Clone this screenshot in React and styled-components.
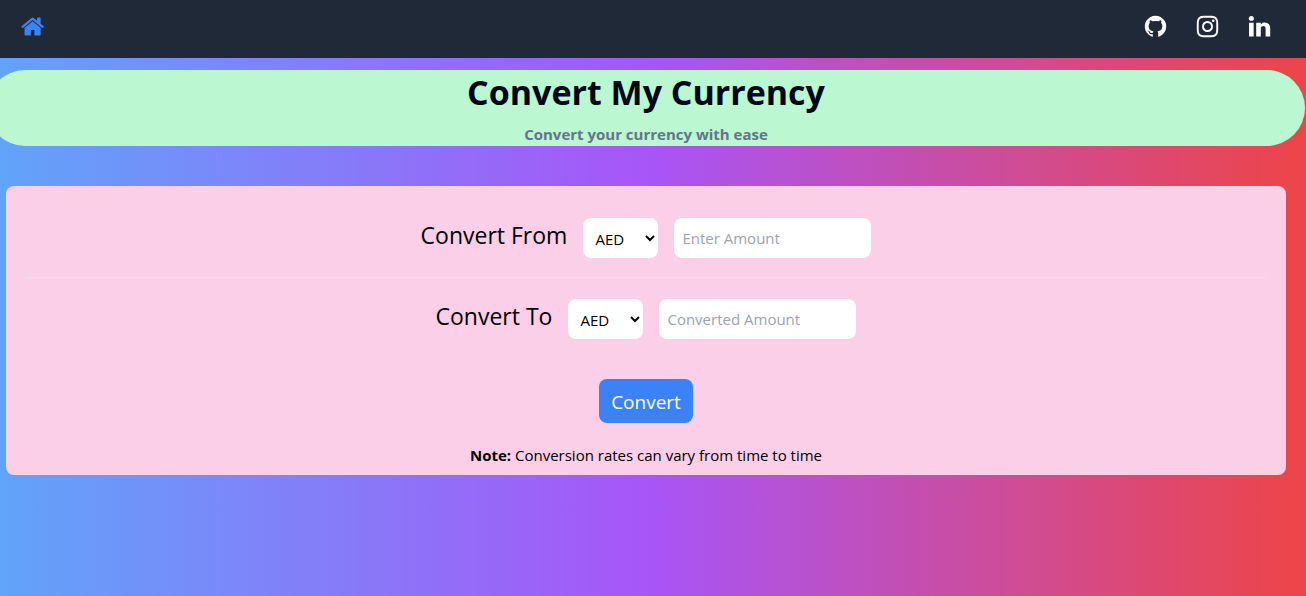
import React from "react";
import styled, { createGlobalStyle } from "styled-components";

const GlobalStyle = createGlobalStyle`
  *, *::before, *::after { box-sizing: border-box; }
  body {
    margin: 0;
    min-height: 100vh;
    font-family: "Open Sans", "Noto Sans", sans-serif;
    font-size: 15px;
    line-height: 24px;
    color: #000;
    background: linear-gradient(to right, #60a5fa -1%, #a855f7 50%, #ef4444 101%);
  }
  h1, p { margin: 0; }
`;

const Header = styled.header`
  display: flex;
  align-items: center;
  justify-content: space-between;
  height: 58px;
  padding: 0 34px 5px 21px;
  background: #1f2937;
`;

const IconLink = styled.a`
  display: flex;
  color: ${({ $color }) => $color};
`;

const Glyph = styled.svg`
  width: 25px;
  height: 25px;
  fill: currentColor;
`;

const Socials = styled.nav`
  display: flex;
  gap: 27px;
`;

const Main = styled.main`
  padding: 12px 14px 0 0;
`;

const Banner = styled.section`
  margin: 0 -13px;
  border-radius: 38px;
  background: #bbf7d0;
  text-align: center;
`;

const Title = styled.h1`
  padding: 2px 0 10px;
  font-size: 34px;
  line-height: 40px;
  font-weight: 700;
  color: #020617;
`;

const Tagline = styled.p`
  font-weight: 700;
  color: #64748b;
`;

const Card = styled.form`
  display: flex;
  flex-direction: column;
  align-items: center;
  margin: 40px 6px 0;
  padding: 32px 20px 8px;
  border-radius: 8px;
  background: #fbcfe8;
`;

const Row = styled.div`
  display: flex;
  gap: 16px;
`;

const Label = styled.label`
  font-size: 23px;
  line-height: 34px;
`;

const Select = styled.select`
  width: 75px;
  height: 40px;
  padding: 2px 0 0 8px;
  border: 0;
  border-radius: 8px;
  background: #fff;
  color: #000;
  font: inherit;
`;

const Input = styled.input`
  width: 197px;
  height: 40px;
  padding: 0 8px;
  border: 0;
  border-radius: 8px;
  background: #fff;
  font: inherit;
  &::placeholder { color: #9ca3af; opacity: 1; }
`;

const Divider = styled.hr`
  width: 100%;
  margin: 19px 0 21px;
  border: 0;
  border-top: 1px solid #dbeaee;
`;

const Button = styled.button`
  height: 44px;
  margin: 40px 0 20px;
  padding: 2px 12px 0;
  border: 0;
  border-radius: 8px;
  background: #3b82f6;
  color: #fff;
  font: inherit;
  font-size: 19px;
`;

const icons = {
  home: "M1408 992v480q0 26-19 45t-45 19h-384v-384h-256v384h-384q-26 0-45-19t-19-45v-480q0-1 .5-3t.5-3l575-474 575 474q1 2 1 6zm223-69l-62 74q-8 9-21 11h-3q-13 0-21-7l-692-577-692 577q-12 8-24 7-13-2-21-11l-62-74q-8-10-7-23.5t11-21.5l719-599q32-26 76-26t76 26l244 204v-195q0-14 9-23t23-9h192q14 0 23 9t9 23v408l219 182q10 8 11 21.5t-7 23.5z",
  github: "M896 128q209 0 385.5 103t279.5 279.5 103 385.5q0 251-146.5 451.5t-378.5 277.5q-27 5-40-7t-13-30q0-3 .5-76.5t.5-134.5q0-97-52-142 57-6 102.5-18t94-39 81-66.5 53-105 20.5-150.5q0-119-79-206 37-91-8-204-28-9-81 11t-92 44l-38 24q-93-26-192-26t-192 26q-16-11-42.5-27t-83.5-38.5-85-13.5q-45 113-8 204-79 87-79 206 0 85 20.5 150t52.5 105 80.5 67 94 39 102.5 18q-39 36-49 103-21 10-45 15t-57 5-65.5-21.5-55.5-62.5q-19-32-48.5-52t-49.5-24l-20-3q-21 0-29 4.5t-5 11.5 9 14 13 12l7 5q22 10 43.5 38t31.5 51l10 23q13 38 44 61.5t67 30 69.5 7 55.5-3.5l23-4q0 38 .5 88.5t.5 54.5q0 18-13 30t-40 7q-232-77-378.5-277.5t-146.5-451.5q0-209 103-385.5t279.5-279.5 385.5-103z",
  instagram: "M1152 896q0-106-75-181t-181-75-181 75-75 181 75 181 181 75 181-75 75-181zm138 0q0 164-115 279t-279 115-279-115-115-279 115-279 279-115 279 115 115 279zm108-410q0 38-27 65t-65 27-65-27-27-65 27-65 65-27 65 27 27 65zm-502-220q-7 0-76.5-.5t-105.5 0-96.5 3-103 10-71.5 18.5q-50 20-88 58t-58 88q-11 29-18.5 71.5t-10 103-3 96.5 0 105.5.5 76.5-.5 76.5 0 105.5 3 96.5 10 103 18.5 71.5q20 50 58 88t88 58q29 11 71.5 18.5t103 10 96.5 3 105.5 0 76.5-.5 76.5.5 105.5 0 96.5-3 103-10 71.5-18.5q50-20 88-58t58-88q11-29 18.5-71.5t10-103 3-96.5 0-105.5-.5-76.5.5-76.5 0-105.5-3-96.5-10-103-18.5-71.5q-20-50-58-88t-88-58q-29-11-71.5-18.5t-103-10-96.5-3-105.5 0-76.5.5zm768 630q0 229-5 317-10 208-124 322t-322 124q-88 5-317 5t-317-5q-208-10-322-124t-124-322q-5-88-5-317t5-317q10-208 124-322t322-124q88-5 317-5t317 5q208 10 322 124t124 322q5 88 5 317z",
  linkedin: "M477 625v991h-330v-991h330zm21-306q1 73-50.5 122t-135.5 49h-2q-82 0-132-49t-50-122q0-74 51.5-122.5t134.5-48.5 133 48.5 51 122.5zm1166 729v568h-329v-530q0-105-40.5-164.5t-126.5-59.5q-63 0-105.5 34.5t-63.5 85.5q-11 30-11 81v553h-329q2-399 2-647t-1-296l-1-48h329v144h-2q20-32 41-56t56.5-52 87-43.5 114.5-15.5q171 0 275 113.5t104 332.5z",
};

const currencies = ["AED", "AUD", "CAD", "EUR", "GBP", "INR", "JPY", "USD"];

function NavIcon({ name, label, color = "#fff" }) {
  return (
    <IconLink href="#" $color={color} aria-label={label}>
      <Glyph viewBox="0 0 1792 1792" aria-hidden="true">
        <path d={icons[name]} />
      </Glyph>
    </IconLink>
  );
}

function ConvertRow({ id, label, placeholder, readOnly }) {
  return (
    <Row>
      <Label htmlFor={id}>{label}</Label>
      <Select aria-label={`${label} currency`}>
        {currencies.map((c) => <option key={c}>{c}</option>)}
      </Select>
      <Input id={id} type="text" placeholder={placeholder} readOnly={readOnly} />
    </Row>
  );
}

export default function App() {
  return (
    <>
      <GlobalStyle />
      <Header>
        <NavIcon name="home" label="Home" color="#3b82f6" />
        <Socials>
          <NavIcon name="github" label="GitHub" />
          <NavIcon name="instagram" label="Instagram" />
          <NavIcon name="linkedin" label="LinkedIn" />
        </Socials>
      </Header>
      <Main>
        <Banner>
          <Title>Convert My Currency</Title>
          <Tagline>Convert your currency with ease</Tagline>
        </Banner>
        <Card onSubmit={(e) => e.preventDefault()}>
          <ConvertRow id="from" label="Convert From" placeholder="Enter Amount" />
          <Divider />
          <ConvertRow id="to" label="Convert To" placeholder="Converted Amount" readOnly />
          <Button type="submit">Convert</Button>
          <p><strong>Note:</strong> Conversion rates can vary from time to time</p>
        </Card>
      </Main>
    </>
  );
}
